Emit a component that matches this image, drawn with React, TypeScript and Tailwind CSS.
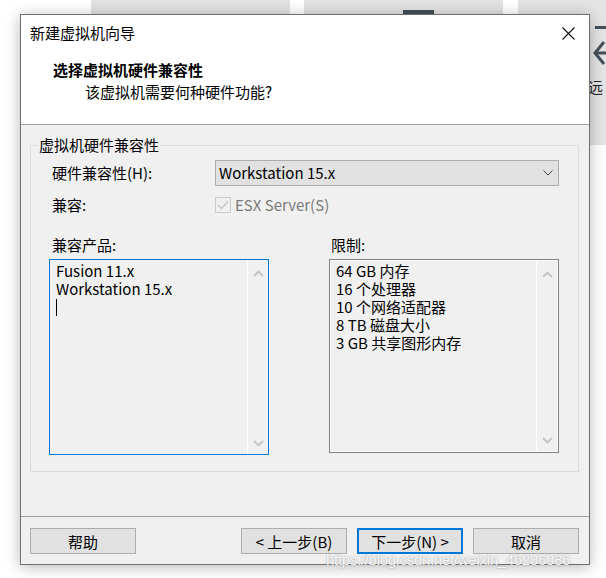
import React from "react";

function Chevron({ dir, className }: { dir: "up" | "down"; className?: string }) {
  return (
    <svg width="11" height="7" viewBox="0 0 11 7" className={className}>
      {dir === "up" ? (
        <path d="M1 6 L5.5 1.5 L10 6" fill="none" stroke="#c4c4c4" strokeWidth="1.8" />
      ) : (
        <path d="M1 1 L5.5 5.5 L10 1" fill="none" stroke="#c4c4c4" strokeWidth="1.8" />
      )}
    </svg>
  );
}

function ScrollCol() {
  return (
    <div className="w-[21px] border-l border-[#ffffff] flex flex-col items-center justify-between pt-[10px] pb-[7px]">
      <Chevron dir="up" />
      <Chevron dir="down" />
    </div>
  );
}

function Btn({ children, primary }: { children: React.ReactNode; primary?: boolean }) {
  return (
    <div
      className={
        "w-[106px] h-[26px] flex items-center justify-center bg-[#e1e1e1] text-[15px] leading-none text-black " +
        (primary ? "border-2 border-[#0078d7]" : "border border-[#adadad]")
      }
    >
      {children}
    </div>
  );
}

export default function App() {
  return (
    <div className="relative w-[606px] h-[578px] overflow-hidden bg-white font-['Noto_Sans_CJK_SC','Noto_Sans',sans-serif] text-black">
      {/* background windows behind the dialog */}
      <div className="absolute left-[91px] top-0 w-[199px] h-[14px] bg-[#e2e2e2]" />
      <div className="absolute left-[304px] top-0 w-[199px] h-[14px] bg-[#e2e2e2]" />
      <div className="absolute left-[403px] top-[10px] w-[31px] h-[4px] bg-[#434f58]" />
      <div className="absolute left-[518px] top-0 w-[88px] h-[145px] bg-[#e4e4e4]" />
      <div className="absolute left-[595px] top-[26px] w-[11px] h-[3px] bg-[#44505a]" />
      <svg className="absolute left-[592px] top-[40px]" width="14" height="26" viewBox="0 0 14 26">
        <path d="M12 2 L3 13 L12 24" fill="none" stroke="#44505a" strokeWidth="3" />
        <path d="M4 13 L14 13" fill="none" stroke="#44505a" strokeWidth="3" />
      </svg>
      <div className="absolute left-[588px] top-[77px] text-[15px] leading-[20px] text-[#222]">远</div>

      {/* dialog window */}
      <div className="absolute left-[20px] top-[14px] w-[570px] h-[551px] border border-[#6f6f6f] bg-[#f0f0f0] shadow-[0_2px_14px_rgba(0,0,0,0.28)] flex flex-col">
        {/* header */}
        <div className="h-[110px] bg-white border-b border-[#a0a0a0] flex flex-col">
          <div className="h-[36px] flex items-center justify-between pl-[9px] pr-[14px]">
            <span className="text-[15px] leading-[20px]">新建虚拟机向导</span>
            <svg width="13" height="13" viewBox="0 0 13 13">
              <path d="M0.5 0.5 L12.5 12.5 M12.5 0.5 L0.5 12.5" stroke="#111" strokeWidth="1.1" fill="none" />
            </svg>
          </div>
          <div className="mt-[8px] pl-[32px] text-[15px] leading-[22px] font-bold">选择虚拟机硬件兼容性</div>
          <div className="pl-[64px] text-[15px] leading-[22px]">该虚拟机需要何种硬件功能?</div>
        </div>

        {/* body */}
        <div className="h-[391px] pt-[20px] pl-[9px] pr-[10px]">
          <div className="relative h-[327px] border border-[#dcdcdc] pt-[14px] pl-[18px]">
            <span className="absolute left-[7px] top-[-11px] bg-[#f0f0f0] px-[1px] text-[15px] leading-[20px]">虚拟机硬件兼容性</span>

            <div className="flex items-center h-[26px]">
              <span className="w-[166px] pl-[3px] text-[15px] leading-[20px]">硬件兼容性(H):</span>
              <div className="w-[344px] h-[26px] bg-[#e1e1e1] border border-[#adadad] flex items-center justify-between pl-[3px] pr-[5px]">
                <span className="text-[15px] leading-[20px]">Workstation 15.x</span>
                <svg width="10" height="6" viewBox="0 0 10 6">
                  <path d="M0.5 0.5 L5 5 L9.5 0.5" fill="none" stroke="#444" strokeWidth="1" />
                </svg>
              </div>
            </div>

            <div className="flex items-center h-[22px] mt-[8px]">
              <span className="w-[166px] pl-[3px] text-[15px] leading-[20px]">兼容:</span>
              <div className="w-[16px] h-[16px] border border-[#cccccc] bg-[#f0f0f0] flex items-center justify-center">
                <svg width="12" height="10" viewBox="0 0 12 10">
                  <path d="M1 5 L4.5 8.5 L11 1.5" fill="none" stroke="#c6c6c6" strokeWidth="1.4" />
                </svg>
              </div>
              <span className="ml-[4px] text-[15px] leading-[20px] text-[#7a7a7a]">ESX Server(S)</span>
            </div>

            <div className="flex mt-[19px] gap-[60px]">
              <div className="flex flex-col w-[220px]">
                <span className="pl-[3px] text-[15px] leading-[20px] h-[20px]">兼容产品:</span>
                <div className="mt-[4px] h-[196px] border border-[#0078d7] flex">
                  <div className="flex-1 pl-[6px] pt-[2px] text-[15px] leading-[18px]">
                    <div>Fusion 11.x</div>
                    <div>Workstation 15.x</div>
                    <div className="w-[1px] h-[17px] bg-black mt-[1px]" />
                  </div>
                  <ScrollCol />
                </div>
              </div>
              <div className="flex flex-col w-[230px]">
                <span className="pl-[2px] text-[15px] leading-[20px] h-[20px]">限制:</span>
                <div className="mt-[4px] h-[194px] border border-[#828282] flex">
                  <div className="flex-1 flex border border-white">
                    <div className="flex-1 pl-[5px] pt-[1px] text-[15px] leading-[18px]">
                      <div>64 GB 内存</div>
                      <div>16 个处理器</div>
                      <div>10 个网络适配器</div>
                      <div>8 TB 磁盘大小</div>
                      <div>3 GB 共享图形内存</div>
                    </div>
                    <ScrollCol />
                  </div>
                </div>
              </div>
            </div>
          </div>
        </div>

        {/* footer */}
        <div className="flex-1 border-t border-[#a0a0a0] pt-[11px] pl-[9px] pr-[10px] flex">
          <Btn>帮助</Btn>
          <div className="flex-1" />
          <div className="flex gap-[10px]">
            <Btn>&lt; 上一步(B)</Btn>
            <Btn primary>下一步(N) &gt;</Btn>
            <Btn>取消</Btn>
          </div>
        </div>
      </div>

      {/* watermark */}
      <div className="absolute left-[326px] top-[549px] text-[15px] leading-[22px] font-['Liberation_Sans',sans-serif] text-white/90 [text-shadow:0_0_2px_rgba(120,120,120,0.8)] tracking-[-0.3px]">
        https://blog.csdn.net/weixin_46206086
      </div>
    </div>
  );
}
